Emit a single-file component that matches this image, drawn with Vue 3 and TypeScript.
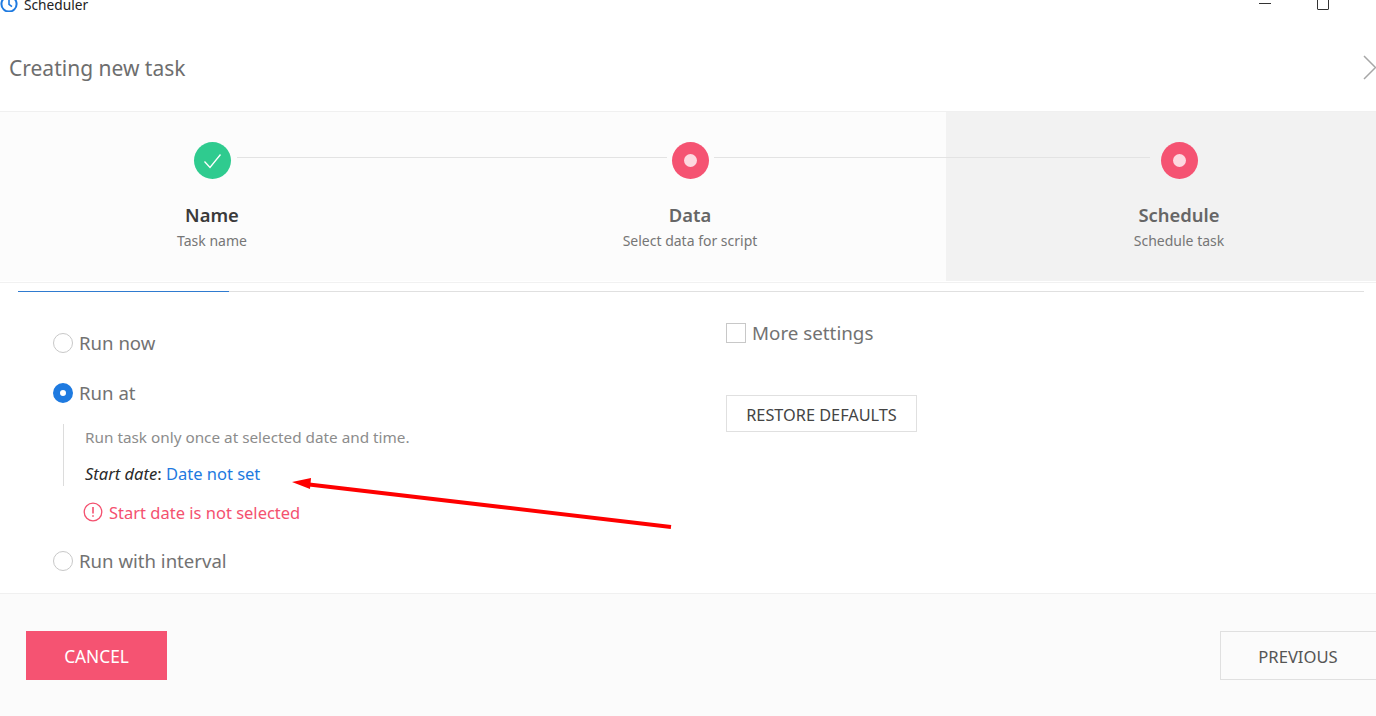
<script setup lang="ts">
interface Step { title: string; sub: string; state: 'done' | 'failed'; active?: boolean }
const steps: Step[] = [
  { title: 'Name', sub: 'Task name', state: 'done' },
  { title: 'Data', sub: 'Select data for script', state: 'failed' },
  { title: 'Schedule', sub: 'Schedule task', state: 'failed', active: true },
]
</script>

<template>
  <div class="app">
    <div class="titlebar">
      <svg class="clock" width="18" height="18" viewBox="0 0 18 18" fill="none" stroke="#1e7ae0" stroke-width="2">
        <circle cx="9" cy="9" r="7.6" />
        <path d="M9 4v5.4l3 2.2" stroke-width="1.6" />
      </svg>
      <span class="app-name">Scheduler</span>
      <span class="win-min"></span>
      <span class="win-max"></span>
    </div>

    <header class="header">
      <h1>Creating new task</h1>
      <svg class="chevron" width="13" height="25" viewBox="0 0 13 25" fill="none" stroke="#a6a6a6" stroke-width="1.5">
        <path d="M1 1l11.5 11.5L1 24" />
      </svg>
    </header>

    <section class="stepper">
      <div v-for="(s, i) in steps" :key="s.title" class="step" :class="[`step-${i + 1}`, { active: s.active }]">
        <span v-if="i < 2" class="connector"></span>
        <div class="bullet" :class="s.state">
          <svg v-if="s.state === 'done'" width="19" height="16" viewBox="0 0 19 16" fill="none" stroke="#fff" stroke-width="1.3">
            <path d="M1.5 8.5l5.5 6L17.5 1.5" />
          </svg>
          <span v-else class="dot"></span>
        </div>
        <div class="step-title" :class="{ dark: s.state === 'done' }">{{ s.title }}</div>
        <div class="step-sub">{{ s.sub }}</div>
      </div>
    </section>

    <div class="stepper-rule"></div>
    <div class="tabline"><span class="tab-active"></span></div>

    <main class="content">
      <div class="col-left">
        <label class="radio-row first"><span class="radio"></span>Run now</label>
        <label class="radio-row second"><span class="radio on"></span>Run at</label>
        <div class="details">
          <p class="desc">Run task only once at selected date and time.</p>
          <p class="start"><em>Start date</em>: <a class="link">Date not set</a></p>
        </div>
        <div class="validation">
          <svg width="20" height="20" viewBox="0 0 20 20" fill="none" stroke="#f4516f" stroke-width="1.3">
            <circle cx="10" cy="10" r="8.8" />
            <path d="M10 5v6.4M10 13.2v1.6" stroke-width="1.6" />
          </svg>
          <span>Start date is not selected</span>
        </div>
        <label class="radio-row third"><span class="radio"></span>Run with interval</label>
      </div>
      <div class="col-right">
        <label class="check-row"><span class="checkbox"></span>More settings</label>
        <button class="btn restore">RESTORE DEFAULTS</button>
      </div>
    </main>

    <footer class="footer">
      <button class="btn cancel">CANCEL</button>
      <button class="btn previous">PREVIOUS</button>
    </footer>

    <svg class="arrow" width="400" height="60" viewBox="0 0 400 60">
      <path d="M379 47L15 4.2" stroke="#fe0000" stroke-width="4" fill="none" />
      <path d="M0 2L19 -2L18 9Z" fill="#fe0000" />
    </svg>
  </div>
</template>

<style>
html, body { margin: 0; background: #fff; overflow: hidden; }
</style>

<style scoped>
.app {
  position: relative;
  width: 1376px;
  height: 716px;
  overflow: hidden;
  display: flex;
  flex-direction: column;
  background: #fff;
  font-family: "Noto Sans", "Open Sans", "Liberation Sans", sans-serif;
  color: #6b6b6b;
}
.titlebar {
  height: 12px;
  flex: none;
  display: flex;
  align-items: flex-end;
  overflow: hidden;
  position: relative;
}
.clock { margin: 0 6px -1px 0; flex: none; }
.app-name {
  font-size: 13.7px;
  line-height: 18px;
  color: #222;
  margin-bottom: -2px;
}
.win-min {
  position: absolute;
  left: 1259px;
  top: 3px;
  width: 12px;
  height: 1px;
  background: #333;
}
.win-max {
  position: absolute;
  left: 1317px;
  top: -4px;
  width: 10px;
  height: 12px;
  border: 1px solid #333;
  border-radius: 1px;
}
.header {
  height: 99px;
  flex: none;
  box-sizing: content-box;
  display: flex;
  align-items: flex-start;
  justify-content: space-between;
  border-bottom: 1px solid #f0f0f0;
  padding-left: 9px;
}
.header h1 {
  margin: 41px 0 0;
  font-size: 21px;
  line-height: 30px;
  font-weight: 400;
  color: #6e6e6e;
}
.chevron { margin-top: 43px; flex: none; }
.stepper {
  height: 169px;
  flex: none;
  display: flex;
  background: #fcfcfc;
}
.step {
  position: relative;
  display: flex;
  flex-direction: column;
  align-items: center;
  padding-top: 30px;
  box-sizing: border-box;
}
.step-1 { width: 434px; padding-right: 10px; }
.step-2 { width: 512px; }
.step-3 { width: 430px; padding-left: 36px; background: #f2f2f2; }
.connector {
  position: absolute;
  top: 45px;
  height: 1px;
  background: #e3e3e3;
  z-index: 1;
}
.step-1 .connector { left: 237px; width: 430px; }
.step-2 .connector { left: 280px; width: 436px; }
.bullet {
  width: 37px;
  height: 37px;
  border-radius: 50%;
  display: flex;
  align-items: center;
  justify-content: center;
  flex: none;
}
.bullet.done { background: #2fcb8f; }
.bullet.failed { background: #f55372; }
.dot {
  width: 13px;
  height: 13px;
  border-radius: 50%;
  background: #fdd9e0;
}
.step-title {
  margin-top: 23px;
  font-size: 18.4px;
  line-height: 26px;
  font-weight: 600;
  color: #666;
}
.step-title.dark { color: #3a3a3a; }
.step-sub {
  margin-top: 3px;
  font-size: 14px;
  line-height: 20px;
  color: #767676;
}
.stepper-rule {
  flex: none;
  height: 1px;
  margin-top: 1px;
  background: #f1f1f1;
}
.tabline {
  flex: none;
  height: 1px;
  margin: 8px 12px 0 18px;
  background: #e0e0e0;
  position: relative;
}
.tab-active {
  position: absolute;
  left: 0;
  top: 0;
  width: 211px;
  height: 1px;
  background: #2f7bd0;
}
.content {
  flex: 1;
  display: flex;
  min-height: 0;
}
.col-left {
  width: 726px;
  flex: none;
  padding: 40px 0 0 53px;
  box-sizing: border-box;
}
.radio-row {
  display: flex;
  align-items: center;
  font-size: 18.6px;
  line-height: 22px;
  color: #727272;
}
.second { margin-top: 28px; }
.third { margin-top: 26px; }
.radio {
  width: 20px;
  height: 20px;
  box-sizing: border-box;
  border: 1px solid #c8c8c8;
  border-radius: 50%;
  margin-right: 6px;
  flex: none;
  background: #fff;
}
.radio.on {
  border: 7px solid #1e7ae0;
}
.details {
  margin: 20px 0 0 10px;
  padding-left: 21px;
  border-left: 1px solid #dcdcdc;
  height: 62px;
  box-sizing: border-box;
}
.details p { margin: 0; }
.desc {
  font-size: 15.3px;
  line-height: 20px;
  padding-top: 3px;
  color: #8c8c8c;
}
.start {
  margin-top: 16px !important;
  font-size: 16.5px;
  line-height: 22px;
  color: #2a2a2a;
}
.link { color: #1e7ae0; }
.validation {
  display: flex;
  align-items: center;
  margin: 14px 0 0 30px;
  height: 24px;
  font-size: 16.5px;
  color: #f4516f;
}
.validation svg { margin-right: 6px; flex: none; }
.col-right { flex: 1; padding-top: 30px; }
.check-row {
  display: flex;
  align-items: center;
  font-size: 18.8px;
  line-height: 22px;
  color: #727272;
}
.checkbox {
  width: 20px;
  height: 20px;
  box-sizing: border-box;
  border: 1px solid #c8c8c8;
  margin-right: 6px;
  flex: none;
}
.btn {
  font-family: inherit;
  box-sizing: border-box;
  background: transparent;
  padding: 2px 0 0;
  cursor: pointer;
}
.restore {
  display: block;
  margin-top: 51px;
  width: 191px;
  height: 37px;
  border: 1px solid #e0e0e0;
  font-size: 16.3px;
  color: #444;
  background: #fff;
}
.footer {
  height: 123px;
  flex: none;
  box-sizing: border-box;
  border-top: 1px solid #f0f0f0;
  background: #fbfbfb;
  display: flex;
  justify-content: space-between;
  align-items: flex-start;
  padding: 37px 0 0 26px;
}
.cancel {
  width: 141px;
  height: 49px;
  border: 0;
  background: #f55372;
  color: #fff;
  font-size: 17.3px;
}
.previous {
  width: 158px;
  height: 49px;
  margin-right: -2px;
  border: 1px solid #e0e0e0;
  padding-right: 2px;
  color: #555;
  font-size: 16.6px;
}
.arrow {
  position: absolute;
  left: 292px;
  top: 480px;
  pointer-events: none;
  overflow: visible;
}
</style>
